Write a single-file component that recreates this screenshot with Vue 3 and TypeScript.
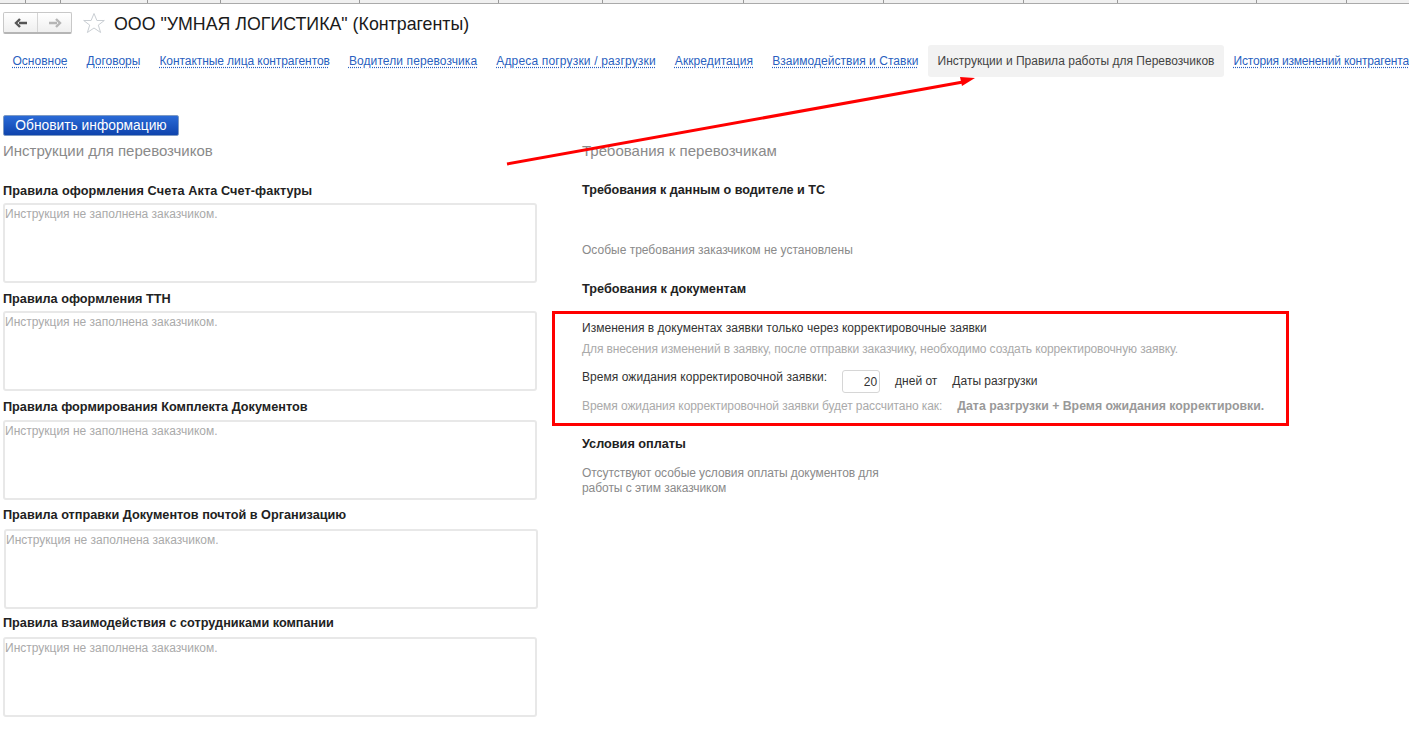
<script setup lang="ts">
const ticks = [25, 60, 147, 220, 359, 498, 602, 743, 883, 1023, 1117, 1256, 1346]
const tabs = [
  { label: 'Основное', active: false, ls: 0 },
  { label: 'Договоры', active: false, ls: 0 },
  { label: 'Контактные лица контрагентов', active: false, ls: -0.07 },
  { label: 'Водители перевозчика', active: false, ls: 0.1 },
  { label: 'Адреса погрузки / разгрузки', active: false, ls: 0.17 },
  { label: 'Аккредитация', active: false, ls: 0.08 },
  { label: 'Взаимодействия и Ставки', active: false, ls: 0.04 },
  { label: 'Инструкции и Правила работы для Перевозчиков', active: true, ls: 0.02 },
  { label: 'История изменений контрагента', active: false, ls: -0.18 },
]
const rules = [
  'Правила оформления Счета Акта Счет-фактуры',
  'Правила оформления ТТН',
  'Правила формирования Комплекта Документов',
  'Правила отправки Документов почтой в Организацию',
  'Правила взаимодействия с сотрудниками компании',
]
</script>

<template>
  <div class="page">
    <div class="ruler">
      <i v-for="t in ticks" :key="t" class="tick" :style="{ left: t + 'px' }"></i>
    </div>
    <header class="head">
      <div class="nav">
        <button class="nav-btn">
          <svg width="14" height="10" viewBox="0 0 14 10"><path d="M13 5H5M6 1 2 5l4 4" fill="none" stroke="#555" stroke-width="2.4"/></svg>
        </button>
        <button class="nav-btn">
          <svg width="14" height="10" viewBox="0 0 14 10"><path d="M1 5h8M8 1l4 4-4 4" fill="none" stroke="#b5b5b5" stroke-width="2.4"/></svg>
        </button>
      </div>
      <svg class="star" width="24" height="22" viewBox="0 0 24 22"><path d="M12 1.5l2.9 7h7.4l-6 4.6 2.3 7.4-6.6-4.5-6.6 4.5 2.3-7.4-6-4.6h7.4z" fill="#fff" stroke="#c9ced3"/></svg>
      <h1 class="title">ООО "УМНАЯ ЛОГИСТИКА" (Контрагенты)</h1>
    </header>
    <nav class="tabs">
      <span v-for="t in tabs" :key="t.label" class="tab" :class="{ active: t.active }" :style="{ letterSpacing: t.ls + 'px' }">{{ t.label }}</span>
    </nav>
    <div class="action"><button class="refresh">Обновить информацию</button></div>
    <main class="cols">
      <section class="left">
        <h2 class="heading">Инструкции для перевозчиков</h2>
        <div class="rules">
          <div v-for="r in rules" :key="r" class="rule">
            <div class="bold">{{ r }}</div>
            <div class="area">Инструкция не заполнена заказчиком.</div>
          </div>
        </div>
      </section>
      <section class="right">
        <h2 class="heading">Требования к перевозчикам</h2>
        <div class="bold r1">Требования к данным о водителе и ТС</div>
        <div class="muted r2">Особые требования заказчиком не установлены</div>
        <div class="bold r3">Требования к документам</div>
        <div class="boxed">
          <div class="dark wide">Изменения в документах заявки только через корректировочные заявки</div>
          <div class="light l2">Для внесения изменений в заявку, после отправки заказчику, необходимо создать корректировочную заявку.</div>
          <div class="wait">
            <span class="dark wait-label">Время ожидания корректировочной заявки:</span>
            <span class="num dark">20</span>
            <span class="dark days">дней от</span>
            <span class="dark">Даты разгрузки</span>
          </div>
          <div class="calc">
            <span class="light">Время ожидания корректировочной заявки будет рассчитано как:</span>
            <b>Дата разгрузки + Время ожидания корректировки.</b>
          </div>
        </div>
        <div class="bold r4">Условия оплаты</div>
        <div class="muted r5">Отсутствуют особые условия оплаты документов для<br />работы с этим заказчиком</div>
      </section>
    </main>
    <svg class="arrow" width="480" height="100" viewBox="0 0 480 100">
      <path d="M2 90 458 8" stroke="#f00" stroke-width="3" fill="none"/>
      <path d="M470 4 455 3l2 9z" fill="#f00"/>
    </svg>
  </div>
</template>

<style>
html, body { margin: 0; background: #fff; overflow: hidden; }
</style>

<style scoped>
.page { position: relative; width: 1409px; height: 738px; overflow: hidden; background: #fff; font-family: "Liberation Sans", sans-serif; font-size: 12px; color: #333; }
.ruler { height: 3px; background: #f0f0f0; border-bottom: 1px solid #aaa; position: relative; }
.tick { position: absolute; top: 0; width: 1px; height: 3px; background: #999; }
.head { display: flex; align-items: center; height: 34px; padding-left: 3px; margin-top: 2px; }
.nav { display: flex; width: 69px; height: 22px; border: 1px solid #c8c8c8; border-bottom: 2px solid #b5b5b5; border-radius: 2px; background: linear-gradient(#fff, #efefef); box-sizing: border-box; }
.nav-btn { flex: 1; border: 0; padding: 0; background: none; display: flex; align-items: center; justify-content: center; }
.nav-btn + .nav-btn { border-left: 1px solid #d5d5d5; }
.star { margin-left: 10px; }
.title { margin: 2px 0 0 8px; font: 400 17.8px "Liberation Sans", sans-serif; color: #1a1a1a; white-space: nowrap; }
.tabs { display: flex; margin-top: 5px; height: 32px; align-items: center; white-space: nowrap; padding-left: 3px; }
.tab { padding: 0 9.5px; line-height: 14px; color: #2a5fc0; font-size: 12px; text-decoration: underline dotted; text-underline-offset: 2px; }
.tab.active { height: 32px; line-height: 32px; background: #f2f2f2; border-radius: 3px; color: #444; text-decoration: none; }
.action { margin-top: 38px; padding-left: 3px; height: 21px; }
.refresh { display: block; width: 176px; height: 21px; padding: 0; border: 1px solid #7d9ac4; border-radius: 2px; background: linear-gradient(#2a6ad6, #0f44ad); color: #fff; font: 13.8px "Liberation Sans", sans-serif; }
.cols { display: flex; }
.left { width: 579px; padding-left: 3px; box-sizing: border-box; }
.right { flex: 1; padding-left: 3px; }
.heading { margin: 0; font: 400 15px/18px "Liberation Sans", sans-serif; color: #8a8a8a; padding-top: 6px; }
.rules { margin-top: 23px; }
.rule { height: 108px; }
.rule:nth-child(1) .bold { letter-spacing: 0.09px; }
.rule:nth-child(3) .area { margin-top: 5px; }
.rule:nth-child(4) .area { margin: 6px 0 0 1px; }
.rule:nth-child(5) .area { margin-top: 6px; }
.bold { font: 700 12.7px/16px "Liberation Sans", sans-serif; color: #222; }
.area { width: 534px; height: 80px; margin-top: 4px; border: 2px solid #e8e8e8; border-radius: 3px; box-sizing: border-box; padding: 2px 0; color: #aaa; font: 12px/14px "Liberation Sans", sans-serif; }
.r1 { margin-top: 22px; font-size: 12.6px; }
.r2 { margin-top: 45px; }
.muted { color: #8a8a8a; font: 12px/14px "Liberation Sans", sans-serif; }
.r3 { margin-top: 24px; }
.boxed { position: relative; margin: 24px 0 0 0; height: 94px; font: 12px/14px "Liberation Sans", sans-serif; }
.boxed::before { content: ""; position: absolute; left: -30px; top: -10px; width: 737px; height: 115px; border: 3px solid #f00; box-sizing: border-box; pointer-events: none; }
.dark { color: #333; }
.wide { letter-spacing: 0.03px; }
.light { color: #aaa; letter-spacing: -0.08px; }
.l2 { margin-top: 7px; letter-spacing: -0.11px; }
.wait { display: flex; align-items: center; margin-top: 13px; height: 24px; }
.wait-label { margin-bottom: 8px; letter-spacing: 0.05px; }
.num { width: 38px; height: 23px; box-sizing: border-box; border: 1px solid #d6d6d6; border-radius: 3px; margin-left: 15px; text-align: right; padding: 4px 2px; }
.days { margin: 0 15px; }
.calc { display: flex; margin-top: 6px; }
.calc b { margin-left: 15px; color: #999; font-size: 12.3px; }
.r4 { margin-top: 21px; }
.r5 { margin-top: 14px; line-height: 15px; letter-spacing: -0.06px; }
.arrow { position: absolute; left: 505px; top: 74px; }
</style>
